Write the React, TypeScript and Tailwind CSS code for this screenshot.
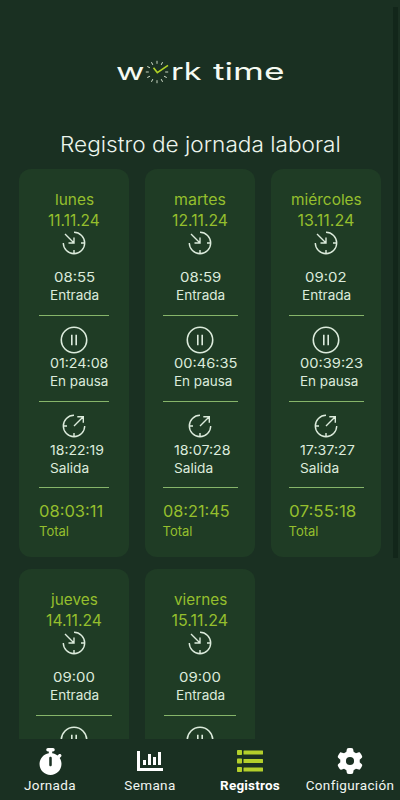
import React, { useLayoutEffect, useRef, useState } from 'react';
import { FaGear, FaStopwatch } from 'react-icons/fa6';

type Fitted = [text: string, width: number];

interface Day {
  name: Fitted;
  date: Fitted;
  start: Fitted;
  pause: Fitted;
  end: Fitted;
  total: Fitted;
  rule: string;
}

const days: Day[] = [
  { name: ['lunes', 39], date: ['11.11.24', 52], start: ['08:55', 41], pause: ['01:24:08', 58], end: ['18:22:19', 54], total: ['08:03:11', 64], rule: 'w-[70px]' },
  { name: ['martes', 52], date: ['12.11.24', 56], start: ['08:59', 41], pause: ['00:46:35', 63], end: ['18:07:28', 57], total: ['08:21:45', 67], rule: 'w-[75px]' },
  { name: ['miércoles', 71], date: ['13.11.24', 57], start: ['09:02', 42], pause: ['00:39:23', 63], end: ['17:37:27', 55], total: ['07:55:18', 67], rule: 'w-[75px]' },
  { name: ['jueves', 47], date: ['14.11.24', 56], start: ['09:00', 42], pause: ['00:45:10', 63], end: ['18:05:32', 57], total: ['08:20:22', 67], rule: 'w-[76px]' },
  { name: ['viernes', 53], date: ['15.11.24', 57], start: ['09:00', 42], pause: ['00:30:04', 63], end: ['15:32:41', 57], total: ['06:02:37', 67], rule: 'w-[72px]' },
];

// Extended lettering: the text is stretched to the given width
function Wide({ children, width, className = '' }: { children: string; width: number; className?: string }) {
  const ref = useRef<HTMLSpanElement>(null);
  const [scale, setScale] = useState(1);
  useLayoutEffect(() => {
    const measure = () => {
      if (ref.current) setScale(width / ref.current.offsetWidth);
    };
    measure();
    document.fonts.ready.then(measure);
  }, [width, children]);
  return <span className={`block whitespace-nowrap ${className}`} style={{ width }}>
      <span ref={ref} className="inline-block origin-left" style={{ transform: `scaleX(${scale})` }}>
        {children}
      </span>
    </span>;
}

function ClockIn() {
  return <svg className="h-6 w-6" viewBox="0 0 24 24" fill="none" stroke="currentColor" strokeWidth="1.4">
      <path d="M12 1.3A10.7 10.7 0 1 1 1.3 12M12 19v3.5M19 12h3.5M3 3l9 9M12 6.5V12H6.5" />
    </svg>;
}

function ClockOut() {
  return <svg className="h-6 w-6" viewBox="0 0 24 24" fill="none" stroke="currentColor" strokeWidth="1.4">
      <path d="M12 1.3A10.7 10.7 0 1 0 22.7 12M12 19v3.5M1.5 12H5M12 12l9-9M15.3 2.7h6v6" />
    </svg>;
}

function PauseIcon() {
  return <svg className="h-7 w-7" viewBox="0 0 28 28" fill="none" stroke="currentColor" strokeWidth="1.6">
      <circle cx="14" cy="14" r="12.7" />
      <path d="M11.8 8.7v10.6M16.2 8.7v10.6" />
    </svg>;
}

function Logo() {
  const ticks = Array.from({ length: 12 }, (_, i) => i * 30).filter(a => a !== 60);
  return <div className="flex h-9 items-center pl-[116px] text-2xl leading-9 text-[#f5faf2]">
      <Wide width={29} className="-mt-px">w</Wide>
      <svg className="h-6 w-6 shrink-0" viewBox="0 0 24 24" fill="none">
        {ticks.map(a => <path key={a} d="M12 0.8v3" stroke="#dce8d5" strokeWidth="0.9" transform={`rotate(${a} 12 12)`} />)}
        <path d="M8.5 7.8l3.8 4.8L23 5.4" stroke="#afd026" strokeWidth="1.6" />
      </svg>
      <Wide width={31} className="-mt-px ml-0.5">rk</Wide>
      <Wide width={72} className="-mt-px ml-[11px]">time</Wide>
    </div>;
}

function DayCard({ day }: { day: Day }) {
  return <article className="flex h-[388px] w-[110px] shrink-0 flex-col items-center rounded-xl bg-[#1f3c25] pt-[21px] text-[#dcebdc]">
      <div className="flex flex-col items-center text-base text-[#95bf2d]">
        <Wide width={day.name[1]} className="text-[15px] leading-5">{day.name[0]}</Wide>
        <Wide width={day.date[1]} className="leading-[21px]">{day.date[0]}</Wide>
      </div>
      <ClockIn />
      <div className="mt-[13px] flex flex-col items-center text-[13.5px] leading-[18px]">
        <Wide width={day.start[1]}>{day.start[0]}</Wide>
        <Wide width={49} className="text-[13px] leading-[19px]">Entrada</Wide>
      </div>
      <div className={`mt-2.5 flex flex-col items-start ${day.rule}`}>
        <hr className="w-full border-[#86b56a]" />
        <div className="mt-2.5 self-center">
          <PauseIcon />
        </div>
        <div className="ml-[11px] text-[13.5px] leading-[18px]">
          <Wide width={day.pause[1]}>{day.pause[0]}</Wide>
          <Wide width={58} className="text-[13px] leading-[19px]">En pausa</Wide>
        </div>
        <hr className="mt-2.5 w-full border-[#86b56a]" />
        <div className="mt-3 self-center">
          <ClockOut />
        </div>
        <div className="ml-[11px] mt-[3px] text-[13.5px] leading-[18px]">
          <Wide width={day.end[1]}>{day.end[0]}</Wide>
          <Wide width={39} className="text-[13px]">Salida</Wide>
        </div>
        <hr className="mt-2.5 w-full border-[#86b56a]" />
        <div className="mt-[13px] text-[#95bf2d]">
          <Wide width={day.total[1]} className="text-base leading-[21px]">{day.total[0]}</Wide>
          <Wide width={30} className="text-[13px] leading-[18px]">Total</Wide>
        </div>
      </div>
    </article>;
}

function ChartIcon() {
  return <svg className="h-[22px] w-[26px]" viewBox="0 0 26 22" fill="currentColor">
      <path d="M0 1h3v17h23v3H0zM6 10h3v5H6zM11 4h3v11h-3zM16 7h3v8h-3zM21 2h3v13h-3z" />
    </svg>;
}

function ListIcon() {
  return <svg className="h-[22px] w-[26px]" viewBox="0 0 26 22" fill="currentColor">
      {[0, 8.5, 17].map(y => <g key={y}>
          <rect y={y} width="5" height="5" rx="0.7" />
          <rect x="6.5" y={y + 0.5} width="19.5" height="4" rx="0.5" />
        </g>)}
    </svg>;
}

const tabs = [
  { label: 'Jornada', icon: <FaStopwatch className="h-[27px] w-[25px]" /> },
  { label: 'Semana', icon: <ChartIcon /> },
  { label: 'Registros', icon: <ListIcon />, active: true },
  { label: 'Configuración', icon: <FaGear className="h-[26px] w-[26px]" /> },
];

export default function App() {
  return <div className="flex h-[800px] w-[400px] flex-col overflow-hidden bg-[#1a3022] font-['Inter','Liberation_Sans',sans-serif]">
      <main className="flex min-h-0 flex-1 overflow-hidden">
        <div className="w-[393px] shrink-0 pt-[54px]">
          <Logo />
          <h1 className="mt-[41px] flex h-7 pl-[60px] text-[21px] font-light leading-7 text-[#edf5ed]">
            <Wide width={281}>Registro de jornada laboral</Wide>
          </h1>
          <section className="mt-2.5 flex flex-wrap gap-x-4 gap-y-3 pl-[19px]">
            {days.map(day => <DayCard key={day.date[0]} day={day} />)}
          </section>
        </div>
        <div className="mt-[7px] h-[551px] w-[5px] bg-[#12261a]" />
      </main>
      <nav className="grid h-[61px] shrink-0 grid-cols-4 bg-[#1a3022] font-['Roboto',sans-serif] text-[13.5px] text-[#f1f6f1]">
        {tabs.map(tab => <div key={tab.label} className="flex flex-col items-center pt-2">
            <div className={`flex h-7 items-center ${tab.active ? 'text-[#b3cf2b]' : 'text-white'}`}>{tab.icon}</div>
            <span className={`whitespace-nowrap leading-5 ${tab.active ? 'font-bold tracking-[0.2px] text-white' : 'tracking-[0.35px]'}`}>{tab.label}</span>
          </div>)}
      </nav>
    </div>;
}
